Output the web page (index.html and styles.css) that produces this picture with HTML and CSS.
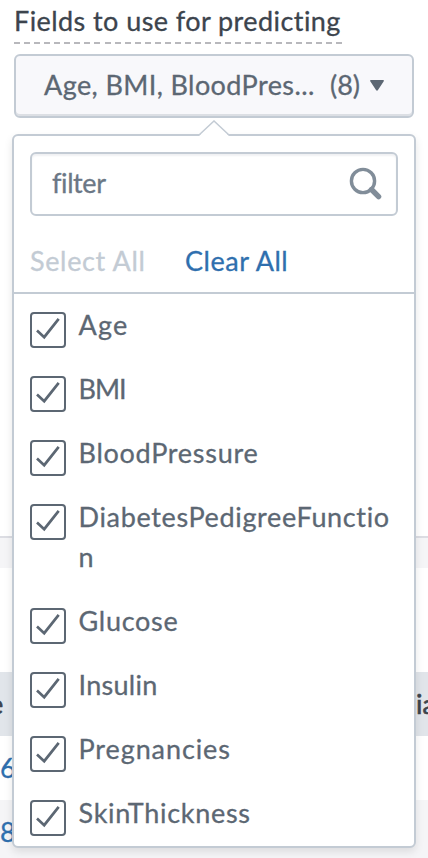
FILE: index.html
```html
<!DOCTYPE html>
<html lang="en">
<head>
<meta charset="utf-8">
<title>Fields to use for predicting</title>
<link rel="stylesheet" href="styles.css">
</head>
<body>
<svg class="defs" width="0" height="0">
  <symbol id="check" viewBox="2 2 32 32"><path d="M7 18.6 14.2 25.2 28.7 6.8" fill="none" stroke="currentColor" stroke-width="2.7"/></symbol>
</svg>
<main class="page">
  <section class="form">
    <label class="title"><span class="t-title">Fields to use for predicting</span></label>
    <div class="select">
      <button class="toggle" type="button">
        <span class="t-value">Age, BMI, BloodPres...</span>
        <span class="count">(8)</span>
        <svg class="caret" width="14" height="11" viewBox="0 0 14 11"><path d="M.8 0H13.2Q14.4.4 13.6 1.5L8 10Q7 11.5 6 10L.4 1.5Q-.4.4.8 0Z" fill="currentColor"/></svg>
      </button>
      <div class="menu">
        <svg class="arrow" width="32" height="16" viewBox="0 0 32 16"><path d="M1 16 16 1 31 16Z" fill="#fff"/><path d="M1 15 16 1 31 15" fill="none" stroke="#c3cbd4" stroke-width="1.5"/></svg>
        <div class="filter">
          <span class="t-filter">filter</span>
          <svg width="34" height="34" viewBox="0 0 34 34"><circle cx="14" cy="14" r="11.6" fill="none" stroke="currentColor" stroke-width="3.4"/><path d="M22.5 22.5 29.6 29.6" stroke="currentColor" stroke-width="5.4" stroke-linecap="round"/></svg>
        </div>
        <div class="actions"><span class="select-all">Select All</span><a class="clear-all">Clear All</a></div>
        <ul class="options">
          <li><svg class="box"><use href="#check"/></svg><span class="t-age">Age</span></li>
          <li><svg class="box"><use href="#check"/></svg><span class="t-bmi">BMI</span></li>
          <li><svg class="box"><use href="#check"/></svg><span class="t-blood">BloodPressure</span></li>
          <li><svg class="box"><use href="#check"/></svg><span class="t-diabetes">DiabetesPedigreeFunction</span></li>
          <li><svg class="box"><use href="#check"/></svg><span class="t-glucose">Glucose</span></li>
          <li><svg class="box"><use href="#check"/></svg><span class="t-insulin">Insulin</span></li>
          <li><svg class="box"><use href="#check"/></svg><span class="t-preg">Pregnancies</span></li>
          <li><svg class="box"><use href="#check"/></svg><span class="t-skin">SkinThickness</span></li>
        </ul>
      </div>
    </div>
  </section>
  <div class="band"></div>
  <div class="results">
    <div class="row head"><span class="col-left">e</span><span class="col-right">ia</span></div>
    <div class="row"><span>6</span></div>
    <div class="row alt"><span>8</span></div>
  </div>
</main>
</body>
</html>
```
FILE: styles.css
```css
* { box-sizing: border-box; }
body { margin: 0; background: #fff; color: #5c6773; font: 27px/40px Lato, "Open Sans", sans-serif; font-variant-ligatures: none; -webkit-text-stroke: .3px currentColor; }
.defs { position: absolute; }
.page { width: 428px; height: 858px; overflow: hidden; }
.form { height: 536px; padding: 0 14px; }
.title { display: block; width: 328px; height: 44px; color: #3c444d; white-space: nowrap; background: repeating-linear-gradient(90deg, #b8b8bc 0 6px, transparent 6px 10.06px) 0 42px / 100% 2px no-repeat; }
.title span { display: block; padding-top: 1px; letter-spacing: .43px; }
.select { position: relative; margin-top: 10px; }
.toggle { display: flex; align-items: center; width: 400px; height: 64px; padding: 0 0 2px 28px; border: 2px solid #c3cbd4; border-radius: 6px; background: #f8f8fb; box-shadow: inset 0 -2px #dcdfe4; font: inherit; color: inherit; white-space: nowrap; text-align: left; -webkit-text-stroke: inherit; }
.t-value { width: 286px; letter-spacing: .4px; }
.count { width: 40px; }
.menu { position: absolute; top: 80px; left: -2px; width: 404px; height: 714px; border: 2px solid #c3cbd4; border-radius: 6px; background: #fff; box-shadow: 0 4px 8px rgba(0,0,0,.1); }
.arrow { position: absolute; top: -16px; left: 184px; }
.filter { display: flex; align-items: center; justify-content: space-between; height: 64px; margin: 16px 16px 0; padding: 0 13px 2px 20px; border: 2px solid #c3cbd4; border-radius: 6px; box-shadow: inset 0 2px 2px #f0f1f3; color: #6b7785; }
.filter svg { color: #818d99; margin-top: 2px; }
.t-filter { letter-spacing: -.4px; }
.actions { display: flex; gap: 40px; height: 78px; padding: 25px 16px 0; border-bottom: 2px solid #c3cbd4; white-space: nowrap; }
.select-all { width: 115px; color: #c3cbd4; letter-spacing: .65px; }
.clear-all { color: #2f6fae; letter-spacing: .55px; }
.options { margin: 0; padding: 0; list-style: none; }
.options li { display: flex; gap: 12.5px; padding: 11px 20px 13px 16px; letter-spacing: .72px; }
.options li span { flex: 1; min-width: 0; overflow-wrap: anywhere; }
.box { flex: none; width: 36px; height: 36px; margin: 7px 0 -3px; border: 2px solid #5c6773; border-radius: 4px; }
.options .t-age { letter-spacing: 1.2px; }
.options .t-bmi { letter-spacing: -1px; }
.options .t-diabetes { letter-spacing: .66px; }
.options .t-insulin { letter-spacing: .3px; }
.options .t-preg { letter-spacing: .9px; }
.band { height: 32px; border-top: 2px solid #dcdde3; background: #f5f5f7; }
.results { padding-top: 104px; }
.row { display: flex; justify-content: space-between; align-items: center; height: 64px; color: #2f6fae; }
.head { background: #e1e5ea; color: #3c444d; -webkit-text-stroke-width: .6px; }
.alt { background: #f5f5f7; }
.col-left { margin-left: -11px; }
.col-right { width: 12px; }
```
